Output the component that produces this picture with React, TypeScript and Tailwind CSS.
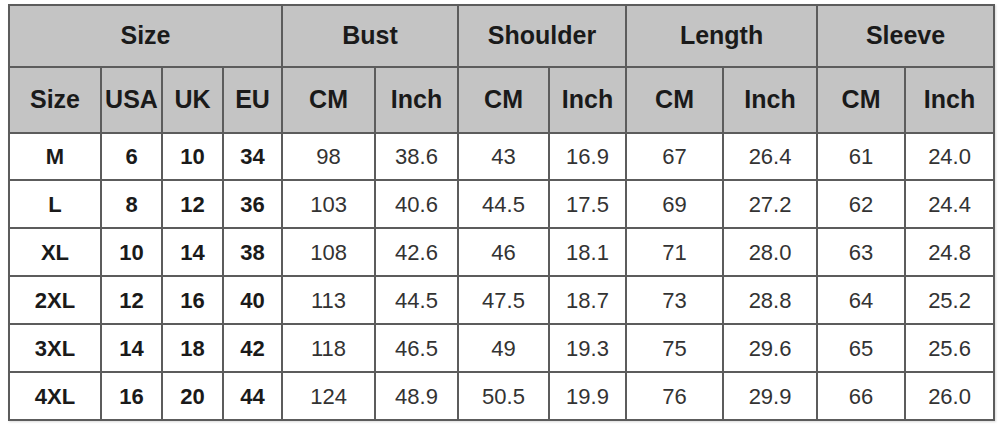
import React from "react";

const widths = [92, 61, 61, 59, 93, 83, 91, 77, 97, 94, 88, 89];

const rows: string[][] = [
  ["M", "6", "10", "34", "98", "38.6", "43", "16.9", "67", "26.4", "61", "24.0"],
  ["L", "8", "12", "36", "103", "40.6", "44.5", "17.5", "69", "27.2", "62", "24.4"],
  ["XL", "10", "14", "38", "108", "42.6", "46", "18.1", "71", "28.0", "63", "24.8"],
  ["2XL", "12", "16", "40", "113", "44.5", "47.5", "18.7", "73", "28.8", "64", "25.2"],
  ["3XL", "14", "18", "42", "118", "46.5", "49", "19.3", "75", "29.6", "65", "25.6"],
  ["4XL", "16", "20", "44", "124", "48.9", "50.5", "19.9", "76", "29.9", "66", "26.0"],
];

const th = "border-2 border-[#5c5c5c] bg-[#c4c4c4] text-[25px] font-bold text-[#1a1a1a] text-center align-middle p-0";
const td = "border-2 border-[#5c5c5c] bg-white text-[22px] text-center align-middle p-0";

export default function App() {
  return (
    <div className="w-[1000px] h-[428px] bg-white pt-[4px] pl-[8px]" style={{ fontFamily: '"Liberation Sans", Arial, sans-serif' }}>
      <table className="table-fixed border-collapse w-[985px] shadow-[1px_1px_2px_rgba(0,0,0,0.15)]">
        <colgroup>
          {widths.map((w, i) => (
            <col key={i} style={{ width: w }} />
          ))}
        </colgroup>
        <thead>
          <tr className="h-[62px]">
            <th colSpan={4} className={th}>Size</th>
            <th colSpan={2} className={th}>Bust</th>
            <th colSpan={2} className={th}>Shoulder</th>
            <th colSpan={2} className={th}>Length</th>
            <th colSpan={2} className={th}>Sleeve</th>
          </tr>
          <tr className="h-[66px]">
            {["Size", "USA", "UK", "EU", "CM", "Inch", "CM", "Inch", "CM", "Inch", "CM", "Inch"].map((t, i) => (
              <th key={i} className={th}>{t}</th>
            ))}
          </tr>
        </thead>
        <tbody>
          {rows.map((r, ri) => (
            <tr key={ri} className={ri === 0 ? "h-[47px]" : "h-[48px]"}>
              {r.map((c, ci) => (
                <td key={ci} className={`${td} ${ci < 4 ? "font-bold text-[#1a1a1a]" : "text-[#333333]"}`}>{c}</td>
              ))}
            </tr>
          ))}
        </tbody>
      </table>
    </div>
  );
}
